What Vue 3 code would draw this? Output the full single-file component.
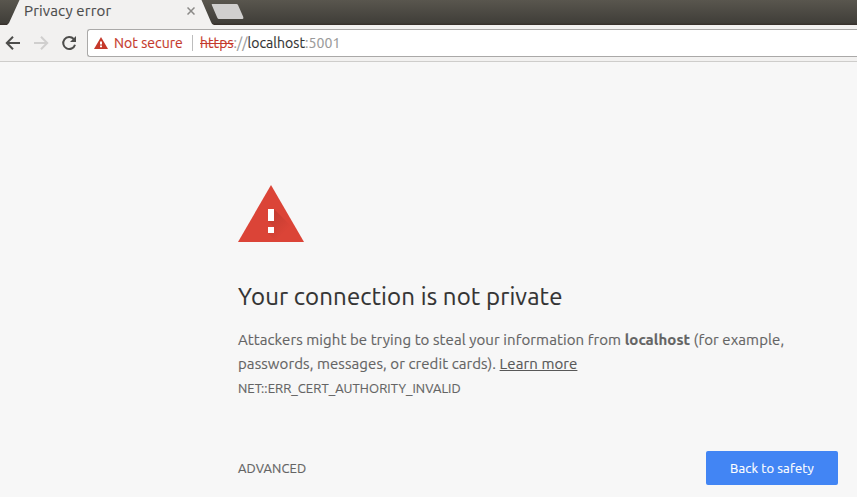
<script setup>
const address = { scheme: 'https', separator: '://', host: 'localhost', port: ':5001' }
</script>

<template>
  <div class="browser">
    <header class="tabstrip">
      <div class="tab">
        <svg class="tab-shape" width="216" height="25" viewBox="0 0 216 25" aria-hidden="true">
          <path d="M7 25 L9 23 L19.500 0 H201.500 L211 22 Q212 25 214 25 Z" fill="#f2f1f0" />
        </svg>
        <span class="tab-title">Privacy error</span>
        <svg class="tab-close" width="8" height="8" viewBox="0 0 8 8" aria-label="Close tab">
          <path d="M.5.5 7.500 7.500M7.500.5.5 7.500" stroke="#8b8a88" stroke-width="1.500" />
        </svg>
      </div>
      <svg class="new-tab" width="34" height="17" viewBox="0 0 34 17" aria-label="New tab">
        <path d="M1.300 1H25.500Q26.500 1 27 2L32.300 14Q32.800 16 31.500 16H8Q6.800 16 6.200 14.500L.8 2Q.3 1 1.300 1Z" fill="#d0cfce" />
      </svg>
    </header>

    <nav class="toolbar">
      <svg class="nav-icon" width="16" height="16" viewBox="0 0 16 16" aria-label="Back">
        <path d="M15 8H2.500M8 1.800 1.800 8 8 14.200" fill="none" stroke="#4d4d4b" stroke-width="2" />
      </svg>
      <svg class="nav-icon" width="16" height="16" viewBox="0 0 16 16" aria-label="Forward">
        <path d="M1 8H13.500M8 1.800 14.200 8 8 14.200" fill="none" stroke="#d0cfce" stroke-width="2" />
      </svg>
      <svg class="nav-icon" width="16" height="16" viewBox="0 0 16 16" aria-label="Reload">
        <path d="M12.700 4A6 6 0 1 0 14 9.700" fill="none" stroke="#4d4d4b" stroke-width="2" />
        <path d="M15 1V7H9Z" fill="#4d4d4b" />
      </svg>
      <div class="omnibox">
        <svg class="alert" width="14" height="12" viewBox="0 0 14 12" aria-hidden="true">
          <path d="M7 0 14 12H0Z" fill="#c5392b" />
          <path d="M6 4.500H8V7.500H6ZM6 8.500H8V10.200H6Z" fill="#fff" />
        </svg>
        <span class="status">Not secure</span>
        <span class="divider"></span>
        <span class="url"><s class="scheme">{{ address.scheme }}</s><span class="separator">{{ address.separator }}</span><span class="host">{{ address.host }}</span><span class="port">{{ address.port }}</span></span>
      </div>
    </nav>

    <main class="page">
      <svg class="warning" width="66" height="57" viewBox="0 0 66 57" aria-hidden="true">
        <defs>
          <linearGradient id="shade" x1="30" y1="24" x2="50" y2="44" gradientUnits="userSpaceOnUse">
            <stop offset="0" stop-color="#bd3a2f" />
            <stop offset="1" stop-color="#db4437" />
          </linearGradient>
        </defs>
        <path d="M33 0 66 57H0Z" fill="#db4437" />
        <path d="M36 24 56 44 63 57H39L30 48 36 42 30 36Z" fill="url(#shade)" />
        <path d="M30 24H36V36H30ZM30 42H36V48H30Z" fill="#fff" />
      </svg>
      <h1>Your connection is not private</h1>
      <p class="message">
        <span class="line">Attackers might be trying to steal your information from <strong>localhost</strong> (for example,</span>
        <span class="line">passwords, messages, or credit cards). <a>Learn more</a></span>
      </p>
      <div class="code">NET::ERR_CERT_AUTHORITY_INVALID</div>
      <div class="actions">
        <span class="advanced">ADVANCED</span>
        <button type="button"><span>Back to safety</span></button>
      </div>
    </main>
  </div>
</template>

<style>
body {
  margin: 0;
  overflow: hidden;
}
</style>

<style scoped>
.browser {
  width: 857px;
  height: 497px;
  overflow: hidden;
  box-sizing: border-box;
  display: flex;
  flex-direction: column;
  background: #f7f7f7;
  font-family: Ubuntu, "Noto Sans", sans-serif;
  -webkit-text-stroke: 0.15px currentColor;
}
.tabstrip {
  height: 25px;
  flex: none;
  display: flex;
  background: linear-gradient(#59564e, #403e39 23px, #38332e 24px, #38302b);
}
.tab {
  position: relative;
  display: flex;
  align-items: center;
  box-sizing: border-box;
  width: 210px;
  height: 22px;
  padding-left: 24px;
}
.tab-shape {
  position: absolute;
  left: 0;
  top: 0;
}
.tab-title {
  position: relative;
  width: 163px;
  color: #4c4c4c;
  font-size: 15px;
  letter-spacing: 0.16px;
  line-height: 20px;
  white-space: nowrap;
}
.tab-close {
  position: relative;
}
.new-tab {
  margin: 3px 0 0 1px;
}
.toolbar {
  height: 37px;
  flex: none;
  display: flex;
  align-items: center;
  box-sizing: border-box;
  padding-left: 5px;
  background: #f2f1f0;
  border-bottom: 1px solid #cecdcb;
}
.nav-icon {
  flex: none;
  margin-right: 12px;
}
.nav-icon:nth-of-type(3) {
  margin-right: 10px;
}
.omnibox {
  flex: 1;
  height: 28px;
  box-sizing: border-box;
  display: flex;
  align-items: center;
  padding-left: 6px;
  border: 1px solid #aaa9a8;
  border-right: 0;
  border-radius: 3px 0 0 3px;
  background: #fff;
  font-size: 14px;
  letter-spacing: 0.06px;
  white-space: nowrap;
}
.status {
  width: 78px;
  margin-left: 6px;
  color: #c5392b;
}
.divider {
  width: 1px;
  height: 16px;
  margin-right: 7px;
  background: #bdbdbd;
}
.scheme {
  color: #c5392b;
}
.separator,
.port {
  color: #999;
}
.host {
  color: #333;
}
.page {
  width: 600px;
  margin-left: 238px;
  padding-top: 123px;
  color: #646464;
}
.warning {
  display: block;
}
h1 {
  margin: 40px 0 0;
  color: #333;
  font-size: 24px;
  font-weight: 400;
  letter-spacing: 0.13px;
  line-height: 30px;
  white-space: nowrap;
}
.message {
  margin: 16px 0 0;
  font-size: 15px;
  letter-spacing: 0.085px;
  line-height: 24px;
}
.line {
  display: block;
  white-space: nowrap;
}
a {
  text-decoration: underline;
  color: #585858;
}
.code {
  font-size: 13px;
  letter-spacing: 0.07px;
  line-height: 24px;
}
.actions {
  margin-top: 51px;
  display: flex;
  justify-content: space-between;
  align-items: center;
  font-size: 13px;
  letter-spacing: 0.13px;
}
button {
  width: 132px;
  height: 34px;
  padding: 0;
  border: 0;
  border-radius: 2px;
  background: #4285f4;
  color: #fff;
  font: inherit;
  letter-spacing: inherit;
}
</style>
